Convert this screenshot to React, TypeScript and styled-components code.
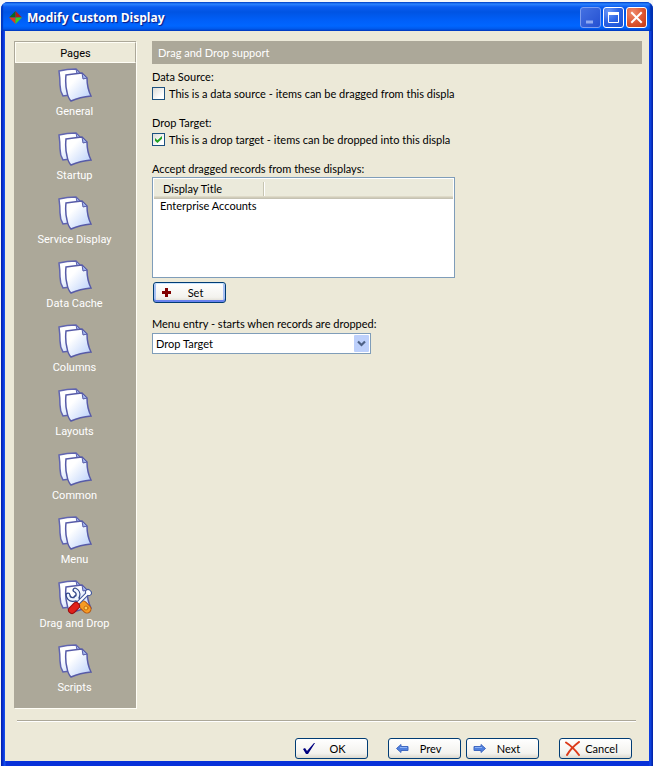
import React, { useState } from "react";
import styled, { createGlobalStyle, css } from "styled-components";

const ui = `Lato, "Liberation Sans", Arial, sans-serif`;
const navFont = `Roboto, Tahoma, sans-serif`;
const titleFont = `"Open Sans", "Trebuchet MS", sans-serif`;

const GlobalStyle = createGlobalStyle`
  *, *::before, *::after { box-sizing: border-box; }
  body { margin: 0; background: #f4f6f8; font: 11px/14px ${ui}; color: #000; }
  h1, h2, ul, p { margin: 0; padding: 0; font: inherit; }
  button, select, input { font: inherit; color: inherit; margin: 0; }
`;

const Frame = styled.div`
  min-height: 100vh;
  display: flex;
  flex-direction: column;
  padding: 2px 0 0 1px;
`;

const Dialog = styled.div`
  flex: 1;
  display: flex;
  flex-direction: column;
  border-radius: 7px 7px 0 0;
  overflow: hidden;
  background: linear-gradient(90deg, #001ea0 0, #0831d9 2px, #1655ee 4px, #0831d9 5px, #0831d9 calc(100% - 4px), #1048e8 calc(100% - 3px), #001ea0 100%);
`;

const TitleBar = styled.header`
  display: flex;
  align-items: center;
  gap: 5px;
  height: 29px;
  padding: 2px 6px 0 8px;
  background: linear-gradient(#0050d8 0, #2b83ff 2px, #0a5cf0 5px, #0054e3 10px, #0060fa 19px, #0066ff 24px, #0058ea 27px, #0040c4 100%);
  box-shadow: inset 2px 0 1px #0039c0, inset -3px 0 2px #0030b0;
`;

const Title = styled.h1`
  flex: 1;
  font: bold 12px/18px ${titleFont};
  color: #fff;
  text-shadow: 1px 1px 1px #0a1883;
`;

const WindowButtons = styled.div`
  display: flex;
  gap: 2px;
`;

const WindowButton = styled.button<{ $kind: "min" | "max" | "close" }>`
  display: grid;
  place-items: center;
  width: 21px;
  height: 21px;
  padding: 0;
  border: 1px solid ${(p) => (p.$kind === "min" ? "#7b9df0" : "#fff")};
  border-radius: 3px;
  background: ${(p) =>
    p.$kind === "close"
      ? "radial-gradient(circle at 30% 25%, #ef8b6c, #dc5530 55%, #bd3a16)"
      : p.$kind === "min"
        ? "linear-gradient(135deg, #4471e2, #2450d2)"
        : "radial-gradient(circle at 25% 20%, #6a98f8, #2a62e4 50%, #1b50d0)"};
`;

const Body = styled.div`
  flex: 1;
  display: flex;
  flex-direction: column;
  margin: 0 4px 5px;
  padding: 10px 7px 2px 9px;
  background: #ece9d8;
`;

const Columns = styled.div`
  flex: 1;
  display: flex;
  gap: 16px;
`;

const Sidebar = styled.nav`
  flex: 0 0 122px;
  border: 1px solid #aca899;
  border-width: 1px 0 0 1px;
  background: #aca899;
  box-shadow: 1px 1px 0 #fffef6;
  font-family: ${navFont};
`;

const SidebarTitle = styled.h2`
  height: 21px;
  border: 1px solid #fffef6;
  border-right-color: #aca899;
  background: #ece9d8;
  line-height: 21px;
  text-align: center;
`;

const PageList = styled.ul`
  list-style: none;
`;

const PageButton = styled.button`
  display: flex;
  flex-direction: column;
  align-items: center;
  gap: 1px;
  width: 100%;
  height: 64px;
  padding: 5px 2px 0 0;
  border: 0;
  background: none;
  color: #fff;
  line-height: 16px;
`;

const Main = styled.main`
  flex: 1;
  min-width: 0;
`;

const Heading = styled.h2`
  height: 23px;
  padding: 0 6px;
  margin-bottom: 6px;
  background: #aca899;
  color: #fff;
  line-height: 24px;
`;

const Group = styled.section`
  margin-bottom: 15px;
`;

const Caption = styled.p`
  margin-bottom: 2px;
`;

const CheckLabel = styled.label`
  display: flex;
  align-items: center;
  gap: 4px;
  height: 15px;
`;

const CheckBox = styled.input`
  appearance: none;
  display: grid;
  place-items: center;
  width: 13px;
  height: 13px;
  border: 1px solid #1c5180;
  background: linear-gradient(135deg, #dcdcd7, #fff 75%);
  &:checked::after {
    content: "";
    width: 7px;
    height: 7px;
    background: #21a121;
    clip-path: polygon(0 30%, 35% 62%, 100% 0, 100% 38%, 35% 100%, 0 68%);
  }
`;

const ListBox = styled.div`
  max-width: 303px;
  height: 101px;
  margin: 1px 0 4px;
  padding: 1px;
  border: 1px solid #7f9db9;
  background: #fff;
`;

const RecordTable = styled.table`
  width: 100%;
  border-collapse: collapse;
  table-layout: fixed;
`;

const HeadCell = styled.th<{ $first?: boolean }>`
  height: 20px;
  padding: 0 9px;
  font-weight: normal;
  text-align: left;
  background: linear-gradient(#ebeadb 0 17px, #dedac8 17px 18px, #d0ccba 18px 19px, #c5c2b2 19px);
  ${(p) =>
    p.$first &&
    css`
      width: 111px;
      background:
        linear-gradient(90deg, #c7c5b2 1px, #fff 1px) right 3px / 2px 14px no-repeat,
        linear-gradient(#ebeadb 0 17px, #dedac8 17px 18px, #d0ccba 18px 19px, #c5c2b2 19px);
    `}
`;

const Cell = styled.td`
  height: 14px;
  padding: 0 6px;
`;

const PushButton = styled.button<{ $default?: boolean }>`
  display: grid;
  grid-template-columns: 15px 1fr;
  align-items: center;
  justify-items: center;
  width: 73px;
  height: 21px;
  padding: 0 8px 0 5px;
  border: 1px solid #003c74;
  border-radius: 3px;
  background: linear-gradient(#fff, #f3f2ee 75%, #dcd8ce);
  ${(p) =>
    p.$default &&
    css`
      margin-left: 1px;
      box-shadow: inset 0 1px #cee7ff, inset 0 -2px #6982ee, inset 2px 0 #a8c1f3, inset -2px 0 #a8c1f3;
    `}
`;

const MenuField = styled.div`
  margin-top: 14px;
`;

const SelectBox = styled.div`
  display: grid;
  align-items: center;
  max-width: 219px;
  height: 21px;
  margin-top: 2px;
  border: 1px solid #7f9db9;
  background: #fff;
  & > * { grid-area: 1 / 1; }
  & > svg { justify-self: end; margin-right: 1px; pointer-events: none; }
`;

const Select = styled.select`
  appearance: none;
  width: 100%;
  height: 19px;
  padding: 0 20px 0 3px;
  border: 0;
  background: transparent;
`;

const Footer = styled.footer`
  display: flex;
  justify-content: flex-end;
  gap: 20px;
  margin: 12px 6px 0 3px;
  padding: 17px 4px 0 0;
  border-top: 1px solid #aca899;
  box-shadow: inset 0 1px #fff;
`;

const Pair = styled.div`
  display: flex;
  gap: 5px;
`;

function AppIcon() {
  return (
    <svg width="13" height="13" viewBox="0 0 13 13" aria-hidden="true">
      <path d="M6.5 0V6.5H0Z" fill="#0b6a1c" />
      <path d="M6.5 0L13 6.5H6.5Z" fill="#b01c18" />
      <path d="M0 6.5H6.5V13Z" fill="#e03a22" />
      <path d="M13 6.5H6.5V13Z" fill="#35d321" />
    </svg>
  );
}

function PagesIcon({ tools }: { tools?: boolean }) {
  return (
    <svg width="34" height="35" viewBox="0 0 34 35" aria-hidden="true">
      <defs>
        <linearGradient id="paper" x1="0" y1="0" x2="1" y2="1">
          <stop offset="0.3" stopColor="#fff" />
          <stop offset="1" stopColor="#b5cdfa" />
        </linearGradient>
      </defs>
      <path d="M1 3Q9 1 18 1L23 6L26 25L5 28Q2 23 2 17Q2 10 1 3Z" fill="url(#paper)" stroke="#6064b0" strokeWidth="1.5" />
      <path d="M18 1L19 6H23Z" fill="#a0b4eb" stroke="#6064b0" />
      <path d="M8 7Q15 6 24 5L29 10Q29 20 33 28Q22 29 13 33Q10 30 9 24Q7 16 8 7Z" fill="url(#paper)" stroke="#575ba8" strokeWidth="1.5" />
      <path d="M24 5L25 11L29 10Z" fill="#a0b4eb" stroke="#575ba8" />
      {tools && (
        <g fill="none" strokeLinecap="round" strokeLinejoin="round">
          <path d="M18 18L25 25" stroke="#33488a" strokeWidth="6" />
          <path d="M17 10A5 5 0 1 1 10 15" stroke="#33488a" strokeWidth="5" />
          <path d="M17 10A5 5 0 1 1 10 15" stroke="#eef5ff" strokeWidth="2.500" />
          <path d="M18 18L25 25" stroke="#eef5ff" strokeWidth="3" />
          <path d="M25 25L29 29" stroke="#b25510" strokeWidth="9" />
          <path d="M25 25L29 29" stroke="#f79b24" strokeWidth="7" />
          <circle cx="28" cy="28" r="2" fill="#ffd25a" stroke="#c66a10" />
          <path d="M19 24L30 13" stroke="#44589c" strokeWidth="4" />
          <path d="M30 12L31 13" stroke="#44589c" strokeWidth="6" />
          <path d="M30 12L31 13" stroke="#fff" strokeWidth="4" />
          <path d="M19 24L30 13" stroke="#fff" strokeWidth="2" />
          <path d="M14 30L18 26" stroke="#9c0c0c" strokeWidth="8" />
          <path d="M14 30L18 26" stroke="#e0201a" strokeWidth="6" />
        </g>
      )}
    </svg>
  );
}

function CheckIcon() {
  return (
    <svg width="14" height="13" viewBox="0 0 14 13" aria-hidden="true">
      <path d="M1 7L3 6L5 9L12 1L13 1L6 12H4Z" fill="#000080" />
    </svg>
  );
}

function ArrowIcon({ right }: { right?: boolean }) {
  return (
    <svg width="14" height="11" viewBox="0 0 14 11" aria-hidden="true">
      <path
        d={right ? "M12.5 5.5L8 1.500V3.500H1V7.500H8V9.500Z" : "M1.500 5.500L6 1.500V3.500H13V7.500H6V9.500Z"}
        fill="#5080de"
        stroke="#4068c0"
      />
      <path d={right ? "M2 4.500H9" : "M5 4.500H12"} stroke="#8db2f5" />
    </svg>
  );
}

function CrossIcon() {
  return (
    <svg width="15" height="15" viewBox="0 0 15 15" aria-hidden="true">
      <path d="M1 1.500Q8 6 14 14M14 1Q6 7 2 14" fill="none" stroke="#dc3c1c" strokeWidth="2" strokeLinecap="round" />
    </svg>
  );
}

function PlusIcon() {
  return (
    <svg width="9" height="9" viewBox="0 0 9 9" aria-hidden="true">
      <path d="M3 0H6V3H9V6H6V9H3V6H0V3H3Z" fill="#800000" />
    </svg>
  );
}

function DropIcon() {
  return (
    <svg width="15" height="17" viewBox="0 0 15 17" aria-hidden="true">
      <rect width="15" height="17" rx="1" fill="#bdd0fb" />
      <path d="M4 6.500L7.500 10L11 6.500" fill="none" stroke="#4d6185" strokeWidth="2.200" />
    </svg>
  );
}

const pages = ["General", "Startup", "Service Display", "Data Cache", "Columns", "Layouts", "Common", "Menu", "Drag and Drop", "Scripts"];

export default function App() {
  const [source, setSource] = useState(false);
  const [target, setTarget] = useState(true);

  return (
    <Frame>
      <GlobalStyle />
      <Dialog>
        <TitleBar>
          <AppIcon />
          <Title>Modify Custom Display</Title>
          <WindowButtons>
            <WindowButton $kind="min" aria-label="Minimize">
              <svg width="15" height="15"><path d="M3 12H10" stroke="#8eaaf2" strokeWidth="3" /></svg>
            </WindowButton>
            <WindowButton $kind="max" aria-label="Maximize">
              <svg width="15" height="15"><path d="M2.500 3.500H12.500V12.500H2.500Z" fill="none" stroke="#fff" /><path d="M2 3.500H13" stroke="#fff" strokeWidth="3" /></svg>
            </WindowButton>
            <WindowButton $kind="close" aria-label="Close">
              <svg width="15" height="15"><path d="M3 3L12 12M12 3L3 12" stroke="#fff" strokeWidth="2" strokeLinecap="square" /></svg>
            </WindowButton>
          </WindowButtons>
        </TitleBar>
        <Body>
          <Columns>
            <Sidebar>
              <SidebarTitle>Pages</SidebarTitle>
              <PageList>
                {pages.map((name) => (
                  <li key={name}>
                    <PageButton>
                      <PagesIcon tools={name === "Drag and Drop"} />
                      {name}
                    </PageButton>
                  </li>
                ))}
              </PageList>
            </Sidebar>
            <Main>
              <Heading>Drag and Drop support</Heading>
              <Group>
                <Caption>Data Source:</Caption>
                <CheckLabel>
                  <CheckBox type="checkbox" checked={source} onChange={(e) => setSource(e.target.checked)} />
                  This is a data source - items can be dragged from this displa
                </CheckLabel>
              </Group>
              <Group>
                <Caption>Drop Target:</Caption>
                <CheckLabel>
                  <CheckBox type="checkbox" checked={target} onChange={(e) => setTarget(e.target.checked)} />
                  This is a drop target - items can be dropped into this displa
                </CheckLabel>
              </Group>
              <p id="accept">Accept dragged records from these displays:</p>
              <ListBox>
                <RecordTable aria-labelledby="accept">
                  <thead>
                    <tr>
                      <HeadCell $first>Display Title</HeadCell>
                      <HeadCell />
                    </tr>
                  </thead>
                  <tbody>
                    <tr>
                      <Cell colSpan={2}>Enterprise Accounts</Cell>
                    </tr>
                  </tbody>
                </RecordTable>
              </ListBox>
              <PushButton $default><PlusIcon />Set</PushButton>
              <MenuField>
                <label htmlFor="entry">Menu entry - starts when records are dropped:</label>
                <SelectBox>
                  <Select id="entry" defaultValue="Drop Target">
                    <option>Drop Target</option>
                  </Select>
                  <DropIcon />
                </SelectBox>
              </MenuField>
            </Main>
          </Columns>
          <Footer>
            <PushButton><CheckIcon />OK</PushButton>
            <Pair>
              <PushButton><ArrowIcon />Prev</PushButton>
              <PushButton><ArrowIcon right />Next</PushButton>
            </Pair>
            <PushButton><CrossIcon />Cancel</PushButton>
          </Footer>
        </Body>
      </Dialog>
    </Frame>
  );
}
